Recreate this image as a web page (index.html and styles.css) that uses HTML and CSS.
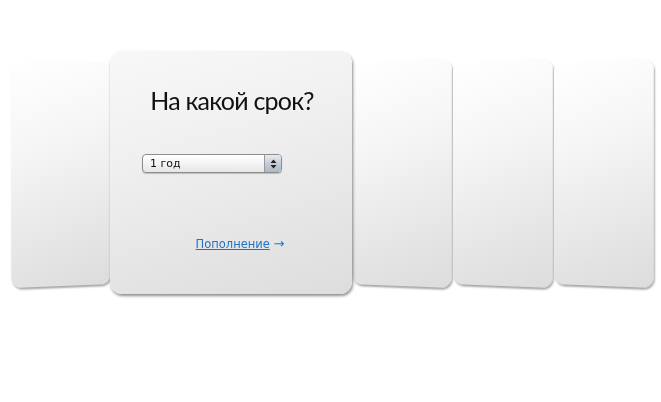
FILE: index.html
```html
<!DOCTYPE html>
<html lang="ru">
<head>
<meta charset="utf-8">
<title>Срок</title>
<link rel="stylesheet" href="styles.css">
</head>
<body>
<div class="stage">
  <div class="card side left"></div>
  <div class="card main">
    <h1 class="title">На какой срок?</h1>
    <div class="select">
      <span class="select-value">1 год</span>
      <span class="stepper">
        <svg width="7" height="10" viewBox="0 0 7 10"><path d="M3.5 0.5 L6.5 4 H0.5 Z M3.5 9.5 L6.5 6 H0.5 Z" fill="#222"/></svg>
      </span>
    </div>
    <div class="next"><a href="#" class="next-link">Пополнение</a> <span class="arrow">→</span></div>
  </div>
  <div class="card side right"></div>
  <div class="card side right"></div>
  <div class="card side right"></div>
</div>
</body>
</html>
```

FILE: styles.css
```css
html, body {
  margin: 0;
  padding: 0;
  background: #ffffff;
}
body {
  font-family: "DejaVu Sans", Verdana, sans-serif;
  width: 661px;
  height: 402px;
  overflow: hidden;
}
.stage {
  display: flex;
  align-items: center;
  padding: 51px 0 0 11px;
  height: 243px;
}
.card {
  flex: none;
  box-sizing: border-box;
  border-radius: 11px;
  background: linear-gradient(160deg, #ffffff 0%, #f6f6f6 35%, #dcdcdc 100%);
}
.side {
  width: 102px;
  height: 226px;
  box-shadow: 1px 2px 2px rgba(0,0,0,0.35);
}
.side.left {
  transform: perspective(600px) rotateY(12deg);
  margin-right: -3px;
  position: relative;
  z-index: 1;
}
.side.right {
  transform: perspective(600px) rotateY(-12deg);
  margin-right: -1px;
}
.main {
  position: relative;
  z-index: 2;
  width: 242px;
  height: 243px;
  margin-right: -2px;
  border-radius: 12px;
  background: linear-gradient(165deg, #f8f8f8 0%, #efefef 40%, #dddddd 100%);
  box-shadow: 1px 2px 3px rgba(0,0,0,0.45);
  display: flex;
  flex-direction: column;
  align-items: center;
}
.title {
  margin: 34px 0 0 2px;
  font-family: "Lato", sans-serif;
  font-weight: 400;
  font-size: 25px;
  letter-spacing: -0.8px;
  line-height: 30px;
  color: #111;
}
.select {
  align-self: flex-start;
  margin: 39px 0 0 32px;
  width: 140px;
  height: 19px;
  box-sizing: border-box;
  border: 1px solid #8d8d8d;
  border-radius: 4px;
  background: linear-gradient(#ffffff, #f4f4f4 50%, #e6e6e6);
  box-shadow: 0 1px 1px rgba(0,0,0,0.2);
  display: flex;
  align-items: center;
  justify-content: space-between;
  overflow: hidden;
}
.select-value {
  font-family: "DejaVu Sans", sans-serif;
  font-size: 11px;
  color: #111;
  padding-left: 7px;
}
.stepper {
  width: 16px;
  height: 100%;
  border-left: 1px solid #9a9a9a;
  background: linear-gradient(#e8edf3, #c3ccd6 50%, #aeb9c6);
  display: flex;
  align-items: center;
  justify-content: center;
}
.next {
  margin: 63px 0 0 18px;
  font-family: "DejaVu Sans", Verdana, sans-serif;
  font-size: 11.5px;
  color: #1f74c8;
}
.next-link {
  color: #1f74c8;
  text-decoration: underline;
}
.arrow {
  color: #1f74c8;
  font-size: 13px;
}
```
